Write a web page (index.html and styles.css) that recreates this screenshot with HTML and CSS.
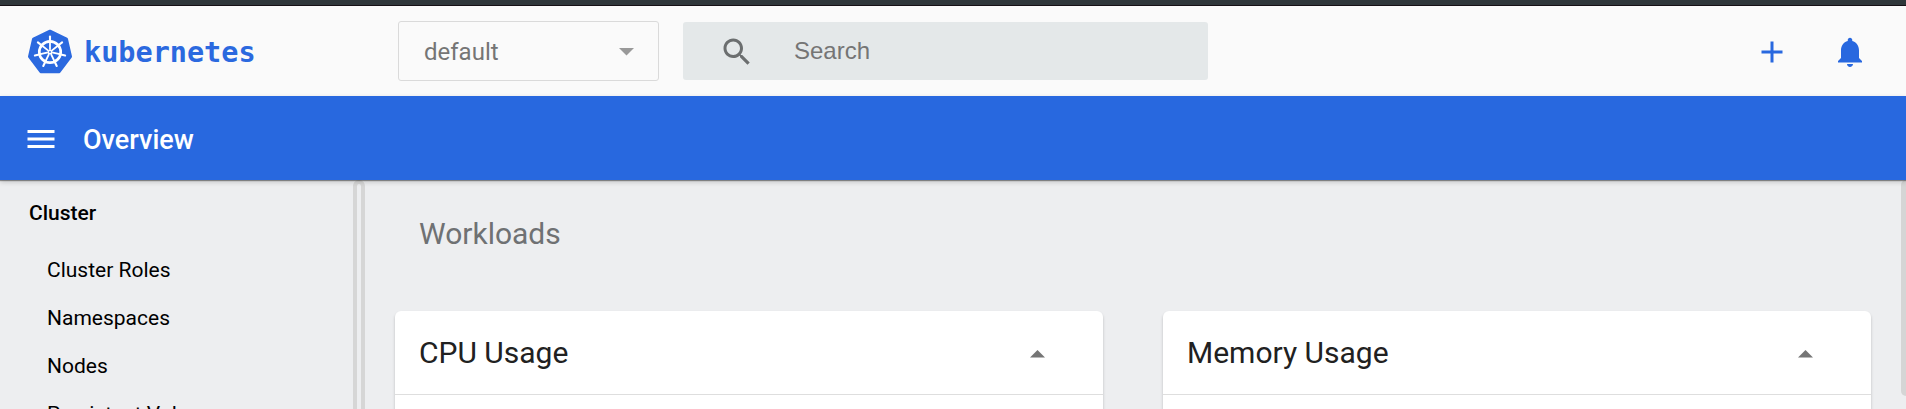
FILE: index.html
```html
<!DOCTYPE html>
<html lang="en">
<head>
<meta charset="utf-8">
<title>Kubernetes Dashboard</title>
<link rel="stylesheet" href="styles.css">
</head>
<body>
<div class="window-edge"></div>
<header class="header">
  <div class="brand">
    <svg class="logo" viewBox="-24 -24 48 48">
      <path fill="#2b69df" stroke="#2b69df" stroke-width="3" stroke-linejoin="round" d="M0-20.8 16.5-12.9 20.5 4.6 9.2 19.7H-9.2L-20.5 4.6-16.5-12.9Z"/>
      <g class="wheel">
        <circle r="10.7" stroke-width="2.7"/>
        <circle r="1.7" stroke-width="1.6"/>
        <g id="spoke"><path stroke-width="1.8" d="M0-3V-10"/><path stroke-width="2.1" d="M0-10V-15.5"/></g>
        <use href="#spoke" transform="rotate(51.43)"/>
        <use href="#spoke" transform="rotate(102.86)"/>
        <use href="#spoke" transform="rotate(154.29)"/>
        <use href="#spoke" transform="rotate(205.71)"/>
        <use href="#spoke" transform="rotate(257.14)"/>
        <use href="#spoke" transform="rotate(308.57)"/>
      </g>
    </svg>
    <span class="brand-name">kubernetes</span>
  </div>
  <div class="namespace"><span>default</span><svg class="caret" viewBox="0 0 15 8"><path d="M0 0h15L7.5 7.5z"/></svg></div>
  <div class="search">
    <svg class="icon" viewBox="0 0 24 24"><path d="M15.5 14h-.79l-.28-.27C15.41 12.59 16 11.11 16 9.5 16 5.91 13.09 3 9.5 3S3 5.91 3 9.5 5.91 16 9.5 16c1.61 0 3.09-.59 4.23-1.57l.27.28v.79l5 4.99L20.49 19l-4.99-5zm-6 0C7.01 14 5 11.99 5 9.5S7.01 5 9.5 5 14 7.01 14 9.5 11.99 14 9.5 14z"/></svg>
    <span class="search-label">Search</span>
  </div>
  <div class="actions">
    <svg class="icon" viewBox="0 0 24 24"><path d="M19 13h-6v6h-2v-6H5v-2h6V5h2v6h6v2z"/></svg>
    <svg class="icon" viewBox="0 0 24 24"><path d="M12 22c1.1 0 2-.9 2-2h-4c0 1.1.89 2 2 2zm6-6v-5c0-3.07-1.64-5.64-4.5-6.32V4c0-.83-.67-1.5-1.5-1.5s-1.5.67-1.5 1.5v.68C7.63 5.36 6 7.92 6 11v5l-2 2v1h16v-1l-2-2z"/></svg>
  </div>
</header>
<div class="toolbar">
  <svg class="icon" viewBox="0 0 24 24"><path d="M3 18h18v-2H3v2zm0-5h18v-2H3v2zm0-7v2h18V6H3z"/></svg>
  <h1 class="page-title">Overview</h1>
</div>
<div class="body">
  <nav class="sidebar">
    <div class="nav-group">Cluster</div>
    <div class="nav-item">Cluster Roles</div>
    <div class="nav-item">Namespaces</div>
    <div class="nav-item">Nodes</div>
    <div class="nav-item">Persistent Volumes</div>
  </nav>
  <div class="side-scroll"></div>
  <main class="main">
    <h2 class="section-title">Workloads</h2>
    <div class="cards">
      <section class="card"><div class="card-head"><span>CPU Usage</span><svg class="caret" viewBox="0 0 15 8"><path d="M0 7.5h15L7.5 0z"/></svg></div></section>
      <section class="card"><div class="card-head"><span>Memory Usage</span><svg class="caret" viewBox="0 0 15 8"><path d="M0 7.5h15L7.5 0z"/></svg></div></section>
    </div>
  </main>
  <div class="main-scroll"></div>
</div>
</body>
</html>
```

FILE: styles.css
```css
* { box-sizing: border-box; }
html, body { margin: 0; height: 409px; overflow: hidden; }
body { display: flex; flex-direction: column; background: #edeef0; font-family: Roboto, sans-serif; }
svg { display: block; flex: none; }
.icon { width: 36px; height: 36px; fill: currentColor; }
.caret { width: 15px; height: 8px; fill: currentColor; }
.window-edge { flex: none; height: 6px; background: #2f373a; border-bottom: 1px solid #151015; }
.header { flex: none; height: 90px; display: flex; align-items: center; background: #fafafa; }
.brand { width: 398px; padding: 1px 0 0 26px; display: flex; align-items: center; color: #2b69df; }
.logo { width: 48px; height: 48px; }
.wheel { fill: none; stroke: #fff; stroke-linecap: round; }
.brand-name { margin-left: 10px; padding-top: 3px; font: bold 28.5px/40px "DejaVu Sans Mono", monospace; }
.namespace { width: 261px; height: 60px; display: flex; align-items: center; justify-content: space-between; padding: 0 24px 0 25px; border: 1px solid #dadada; border-radius: 3px; color: #757575; font-size: 24px; }
.namespace span { padding-top: 2px; }
.namespace .caret { margin-top: 1px; color: #999; }
.search { width: 525px; height: 58px; margin-left: 24px; padding-left: 36px; display: flex; align-items: center; border-radius: 3px; background: #e4e8e9; color: #6b6e6f; }
.search .icon { margin-top: 1px; }
.search-label { margin-left: 39px; color: #757575; font: 24px/30px "Liberation Sans", sans-serif; }
.actions { display: flex; gap: 42px; margin-left: auto; padding: 2px 38px 0 0; color: #2868df; }
.toolbar { position: relative; flex: none; height: 84px; display: flex; align-items: center; padding: 2px 23px 0; background: #2868df; color: #fff; box-shadow: 0 1px 1px rgba(0,0,0,.38), 0 2px 5px rgba(0,0,0,.18); }
.page-title { margin: 1px 0 0 24px; font-size: 27px; font-weight: 500; line-height: 36px; }
.body { flex: 1; min-height: 0; display: flex; align-items: flex-start; overflow: hidden; }
.sidebar { width: 353px; flex: none; font-size: 21px; color: #000; }
.nav-group { padding: 9px 29px 0; height: 66px; line-height: 48px; font-weight: 500; }
.nav-item { padding-left: 47px; height: 48px; line-height: 48px; }
.side-scroll { flex: none; width: 12px; height: 300px; border: 4px solid #d6d6d6; border-radius: 6px; }
.main { flex: 1; padding: 0 30px; }
.section-title { margin: 0; padding-left: 24px; height: 131px; padding-top: 30px; line-height: 48px; font-size: 30px; font-weight: 400; color: #6f7173; }
.cards { display: flex; gap: 60px; }
.card { flex: 1; height: 200px; background: #fff; border-radius: 6px; box-shadow: 0 2px 3px rgba(0,0,0,.22); }
.card-head { height: 84px; display: flex; align-items: center; justify-content: space-between; padding: 0 58px 0 24px; border-bottom: 1px solid #dedede; font-size: 30px; color: #212121; }
.card-head .caret { margin-top: 2px; color: #757575; }
.main-scroll { flex: none; width: 5px; height: 216px; background: #d5d5d5; border-radius: 5px 0 0 5px; }
```
